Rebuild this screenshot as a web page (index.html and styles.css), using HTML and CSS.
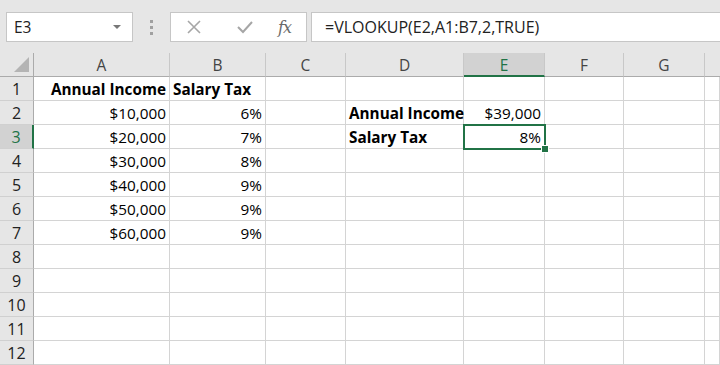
FILE: index.html
```html
<!DOCTYPE html>
<html>
<head>
<meta charset="utf-8">
<link rel="stylesheet" href="styles.css">
</head>
<body>
<div class="topbar">
  <div class="namebox"><span>E3</span><span class="caret"></span></div>
  <div class="grip"><i></i><i></i><i></i></div>
  <div class="fnbtns">
    <svg class="ico" width="16" height="16" viewBox="0 0 16 16"><path d="M2 2 L14 14 M14 2 L2 14" stroke="#a6a6a6" stroke-width="1.6" fill="none"/></svg>
    <svg class="ico" width="18" height="16" viewBox="0 0 18 16"><path d="M2 8 L7 13 L16 3" stroke="#a6a6a6" stroke-width="2" fill="none"/></svg>
    <span class="fx">fx</span>
  </div>
  <div class="formula">=VLOOKUP(E2,A1:B7,2,TRUE)</div>
</div>
<div class="sheet">
  <div class="hd corner"><span class="tri"></span></div>
  <div class="hd col">A</div>
  <div class="hd col">B</div>
  <div class="hd col">C</div>
  <div class="hd col">D</div>
  <div class="hd col sel">E</div>
  <div class="hd col">F</div>
  <div class="hd col">G</div>
  <div class="hd col last"></div>

  <div class="hd row">1</div>
  <div class="c r b">Annual Income</div><div class="c b">Salary Tax</div><div class="c"></div><div class="c"></div><div class="c"></div><div class="c"></div><div class="c"></div><div class="c"></div>

  <div class="hd row">2</div>
  <div class="c r">$10,000</div><div class="c r">6%</div><div class="c"></div><div class="c b">Annual Income</div><div class="c r">$39,000</div><div class="c"></div><div class="c"></div><div class="c"></div>

  <div class="hd row rsel">3</div>
  <div class="c r">$20,000</div><div class="c r">7%</div><div class="c"></div><div class="c b">Salary Tax</div><div class="c r active">8%<span class="handle"></span></div><div class="c"></div><div class="c"></div><div class="c"></div>

  <div class="hd row">4</div>
  <div class="c r">$30,000</div><div class="c r">8%</div><div class="c"></div><div class="c"></div><div class="c"></div><div class="c"></div><div class="c"></div><div class="c"></div>

  <div class="hd row">5</div>
  <div class="c r">$40,000</div><div class="c r">9%</div><div class="c"></div><div class="c"></div><div class="c"></div><div class="c"></div><div class="c"></div><div class="c"></div>

  <div class="hd row">6</div>
  <div class="c r">$50,000</div><div class="c r">9%</div><div class="c"></div><div class="c"></div><div class="c"></div><div class="c"></div><div class="c"></div><div class="c"></div>

  <div class="hd row">7</div>
  <div class="c r">$60,000</div><div class="c r">9%</div><div class="c"></div><div class="c"></div><div class="c"></div><div class="c"></div><div class="c"></div><div class="c"></div>

  <div class="hd row">8</div>
  <div class="c"></div><div class="c"></div><div class="c"></div><div class="c"></div><div class="c"></div><div class="c"></div><div class="c"></div><div class="c"></div>

  <div class="hd row">9</div>
  <div class="c"></div><div class="c"></div><div class="c"></div><div class="c"></div><div class="c"></div><div class="c"></div><div class="c"></div><div class="c"></div>

  <div class="hd row">10</div>
  <div class="c"></div><div class="c"></div><div class="c"></div><div class="c"></div><div class="c"></div><div class="c"></div><div class="c"></div><div class="c"></div>

  <div class="hd row">11</div>
  <div class="c"></div><div class="c"></div><div class="c"></div><div class="c"></div><div class="c"></div><div class="c"></div><div class="c"></div><div class="c"></div>

  <div class="hd row">12</div>
  <div class="c"></div><div class="c"></div><div class="c"></div><div class="c"></div><div class="c"></div><div class="c"></div><div class="c"></div><div class="c"></div>
</div>
</body>
</html>
```
FILE: styles.css
```css
* { box-sizing: border-box; }
html, body { margin: 0; padding: 0; }
body {
  width: 720px;
  height: 365px;
  overflow: hidden;
  background: #fff;
  font-family: "Open Sans", "Noto Sans", sans-serif;
  color: #000;
}
.topbar {
  height: 53px;
  background: #e6e6e6;
  display: flex;
  align-items: flex-start;
  padding: 12px 0 0 6px;
}
.namebox {
  width: 127px;
  height: 30px;
  background: #fff;
  border: 1px solid #c6c6c6;
  display: flex;
  align-items: center;
  justify-content: space-between;
  padding: 0 11px 0 7px;
  font-size: 15.5px;
  color: #222;
}
.caret {
  width: 0; height: 0;
  border-left: 4px solid transparent;
  border-right: 4px solid transparent;
  border-top: 4px solid #777;
}
.grip {
  width: 37px;
  height: 30px;
  display: flex;
  flex-direction: column;
  align-items: center;
  justify-content: center;
  gap: 3px;
}
.grip i {
  display: block;
  width: 3px; height: 3px;
  background: #a0a0a0;
}
.fnbtns {
  width: 137px;
  height: 30px;
  background: #fff;
  border: 1px solid #c6c6c6;
  display: flex;
  align-items: center;
  padding-left: 15px;
}
.fnbtns .ico { display: block; }
.fnbtns .ico:first-child { margin-right: 34px; }
.fnbtns .ico:nth-child(2) { margin-right: 24px; }
.fx {
  font-family: "DejaVu Serif", "Liberation Serif", serif;
  font-style: italic;
  font-size: 16px;
  color: #6a6a6a;
  letter-spacing: -1px;
}
.formula {
  margin-left: 4px;
  flex: 1;
  height: 30px;
  background: #fff;
  border: 1px solid #c6c6c6;
  border-right: none;
  padding-left: 13px;
  font-size: 16px;
  line-height: 28px;
  color: #222;
  white-space: nowrap;
}
.sheet {
  display: grid;
  grid-template-columns: 34px 136px 96px 80px 118px 81px 79px 81px 15px;
  grid-auto-rows: 24px;
}
.hd {
  background: #e6e6e6;
  color: #444;
  font-size: 15.5px;
  display: flex;
  align-items: center;
  justify-content: center;
}
.hd.col {
  border-right: 1px solid #c8c8c8;
  border-bottom: 1px solid #ababab;
  padding-top: 1px;
}
.hd.col.last { border-right: none; }
.hd.col.sel {
  background: #d2d2d2;
  border-bottom: 2px solid #217346;
  color: #217346;
  padding-top: 2px;
}
.corner {
  border-right: 1px solid #ababab;
  border-bottom: 1px solid #ababab;
  position: relative;
}
.tri {
  position: absolute;
  right: 4px;
  bottom: 4px;
  width: 0; height: 0;
  border-left: 15px solid transparent;
  border-bottom: 15px solid #b4b4b4;
}
.hd.row {
  border-right: 1px solid #ababab;
  border-bottom: 1px solid #d0d0d0;
  font-size: 16px;
  color: #222;
}
.hd.row.rsel {
  background: #d2d2d2;
  border-right: 2px solid #217346;
  color: #217346;
}
.c {
  border-right: 1px solid #d4d4d4;
  border-bottom: 1px solid #d4d4d4;
  font-size: 15.3px;
  line-height: 25px;
  padding: 0 3px;
  white-space: nowrap;
  overflow: visible;
  position: relative;
}
.c.r { text-align: right; }
.c.b { font-weight: 700; }
.c.active {
  z-index: 2;
  border: 2px solid #217346;
  margin: -1px 0 0 -1px;
  width: 83px;
  height: 26px;
  line-height: 23px;
  padding: 0 3px 0 0;
}
.handle {
  position: absolute;
  right: -5px;
  bottom: -5px;
  width: 8px;
  height: 8px;
  background: #217346;
  border: 1px solid #fff;
}
```
